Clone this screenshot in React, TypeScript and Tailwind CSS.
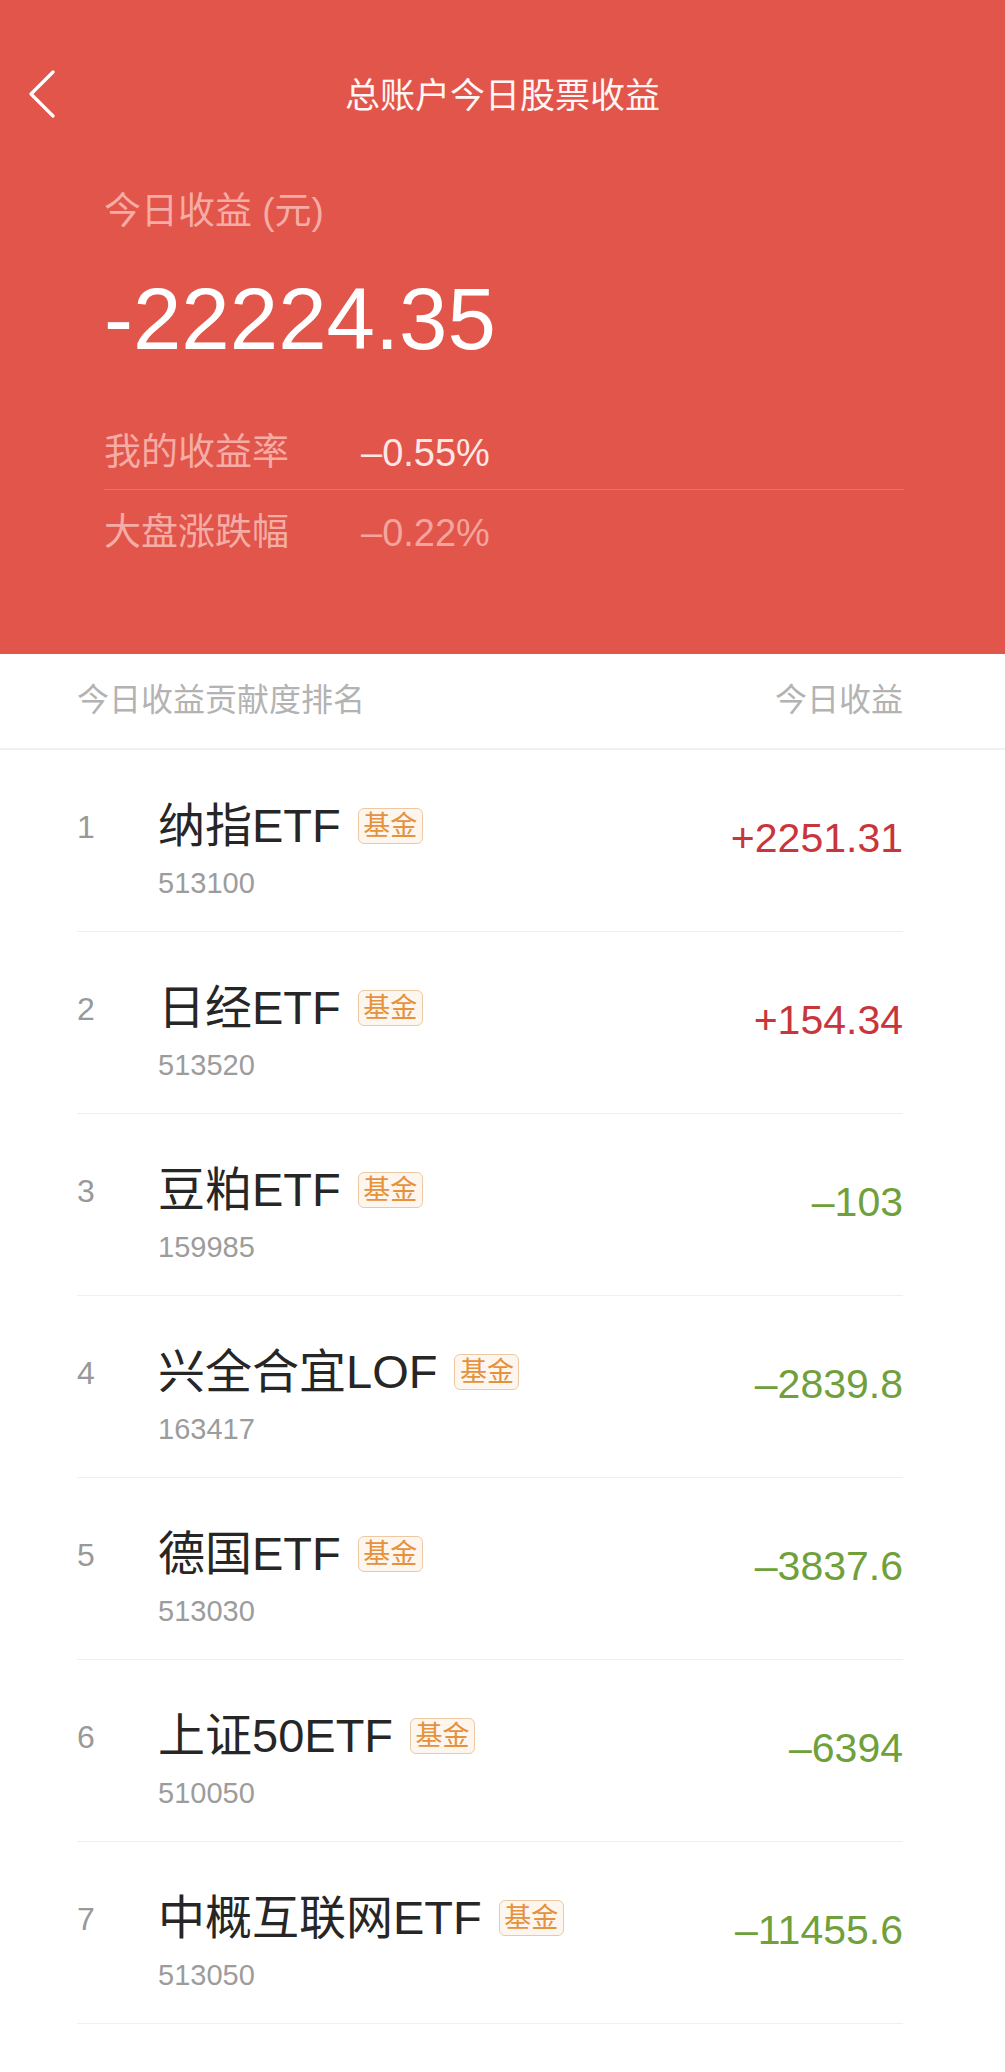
import React from "react"

type Item = {
  rank: number
  name: string
  code: string
  value: string
  up: boolean
}

const ITEMS: Item[] = [
  { rank: 1, name: "纳指ETF", code: "513100", value: "+2251.31", up: true },
  { rank: 2, name: "日经ETF", code: "513520", value: "+154.34", up: true },
  { rank: 3, name: "豆粕ETF", code: "159985", value: "–103", up: false },
  { rank: 4, name: "兴全合宜LOF", code: "163417", value: "–2839.8", up: false },
  { rank: 5, name: "德国ETF", code: "513030", value: "–3837.6", up: false },
  { rank: 6, name: "上证50ETF", code: "510050", value: "–6394", up: false },
  { rank: 7, name: "中概互联网ETF", code: "513050", value: "–11455.6", up: false },
]

const FONT = "font-['Liberation_Sans','Noto_Sans_CJK_SC',sans-serif]"

function BackIcon() {
  return (
    <svg width="30" height="48" viewBox="0 0 30 48" fill="none">
      <path d="M26 2 L4 24 L26 46" stroke="#ffffff" strokeWidth="3.2" strokeLinecap="round" strokeLinejoin="round" />
    </svg>
  )
}

function Badge() {
  return (
    <span className="ml-[17px] flex h-[36px] w-[65px] items-center justify-center rounded-[6px] border-[1.5px] border-[#ecc9a3] bg-[#fdf6ee] text-[27px] leading-none text-[#e6913c]">
      基金
    </span>
  )
}

function Row({ item }: { item: Item }) {
  return (
    <div className="box-border flex h-[182px] items-start border-b border-[#efefef] pt-[50px]">
      {/* Rank */}
      <div className="mt-[1px] w-[81px] text-[32px] leading-[52px] text-[#999999]">{item.rank}</div>

      {/* Name + code */}
      <div className="flex-1">
        <div className="flex h-[52px] items-center">
          <span className="text-[47px] leading-[52px] text-[#262626]">{item.name}</span>
          <Badge />
        </div>
        <div className="mt-[13px] text-[29px] leading-[36px] text-[#9c9c9c]">{item.code}</div>
      </div>

      {/* Value */}
      <div className={`mt-[14px] text-[41px] leading-[48px] ${item.up ? "text-[#c8363c]" : "text-[#70a03c]"}`}>
        {item.value}
      </div>
    </div>
  )
}

export default function App() {
  return (
    <div className={`h-[2072px] w-[1005px] bg-white ${FONT}`}>
      {/* Red header */}
      <section className="h-[654px] bg-[#e1554b]">
        {/* Nav */}
        <div className="grid h-[190px] grid-cols-[1fr_auto_1fr] items-center">
          <div className="pl-[27px] pb-[2px]">
            <BackIcon />
          </div>
          <h1 className="text-[35px] leading-none text-[#fff6f5]">总账户今日股票收益</h1>
          <div />
        </div>

        <div className="pl-[104px] pr-[101px]">
          <p className="text-[37px] leading-[44px] text-[#f5aca5]">今日收益 (元)</p>
          <p className="mt-[35px] text-[87px] leading-[100px] text-white">-22224.35</p>

          {/* Stats */}
          <div className="mt-[47px]">
            <div className="flex h-[74px] items-center border-b border-[#ea6f66]">
              <span className="w-[257px] text-[37px] leading-[44px] text-[#f5aca5]">我的收益率</span>
              <span className="text-[38px] leading-[44px] text-[#fde7e4]">–0.55%</span>
            </div>
            <div className="flex pt-[21px]">
              <span className="w-[257px] text-[37px] leading-[44px] text-[#f5aca5]">大盘涨跌幅</span>
              <span className="text-[38px] leading-[44px] text-[#f3a49c]">–0.22%</span>
            </div>
          </div>
        </div>
      </section>

      {/* Ranking header */}
      <div className="flex h-[96px] items-center justify-between border-b-2 border-[#f0f0f0] pl-[77px] pr-[102px] pb-[2px]">
        <span className="text-[32px] leading-none text-[#b3b3b3]">今日收益贡献度排名</span>
        <span className="text-[32px] leading-none text-[#b3b3b3]">今日收益</span>
      </div>

      {/* Ranking list */}
      <div className="pl-[77px] pr-[102px]">
        {ITEMS.map((item) => (
          <Row key={item.rank} item={item} />
        ))}
      </div>
    </div>
  )
}
